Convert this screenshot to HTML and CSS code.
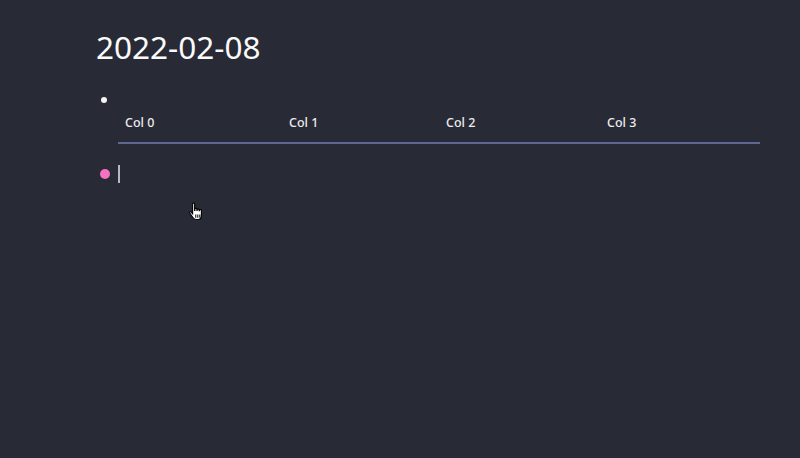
FILE: index.html
```html
<!DOCTYPE html>
<html>
<head>
<meta charset="utf-8">
<link rel="stylesheet" href="styles.css">
</head>
<body>
<div class="page">
  <h1 class="title">2022-02-08</h1>
  <div class="block">
    <span class="bullet"></span>
    <div class="content">
      <table class="tbl">
        <thead>
          <tr><th class="c0">Col 0</th><th class="c1">Col 1</th><th class="c2">Col 2</th><th class="c3">Col 3</th></tr>
        </thead>
      </table>
    </div>
  </div>
  <div class="block edit">
    <span class="bullet pink"></span>
    <div class="content"><span class="caret"></span></div>
  </div>
</div>
<svg class="pointer" width="16" height="18" viewBox="0 0 14 16">
  <path d="M4 1.5c0-.8 1.8-.8 1.8 0V7.5h.2V6.3c0-.8 1.8-.8 1.8 0V7.5h.2V6.8c0-.8 1.8-.8 1.8 0v.9h.2v-.3c0-.8 1.8-.8 1.8 0V12c0 2-1.2 3.5-3 3.5H7c-1.3 0-2.1-.7-2.8-1.7L1.3 9.6c-.5-.8.6-1.5 1.2-.8L4 10.5z" fill="#fff" stroke="#000" stroke-width="1"/>
  <path d="M6.8 11v3M8.6 11v3M10.4 11v3" stroke="#000" stroke-width=".9"/>
</svg>
</body>
</html>
```
FILE: styles.css
```css
html, body {
  margin: 0;
  padding: 0;
  background: #282a36;
  height: 100%;
  overflow: hidden;
}
body {
  font-family: "Noto Sans", "Liberation Sans", sans-serif;
  color: #f2f2f2;
  position: relative;
}
.page {
  padding: 27px 40px 0 96px;
}
.title {
  margin: 0 0 19px 0;
  font-size: 31.5px;
  font-weight: 400;
  line-height: 40px;
  color: #fafafa;
}
.block {
  display: flex;
  align-items: flex-start;
}
.bullet {
  width: 6px;
  height: 6px;
  border-radius: 50%;
  background: #f5f5f5;
  margin: 11px 0 0 5px;
  flex: none;
}
.bullet.pink {
  width: 10px;
  height: 10px;
  background: #f472c0;
  margin: 10px 0 0 4px;
}
.content {
  margin-left: 11px;
  flex: 1;
}
.tbl {
  border-collapse: collapse;
  margin-top: 28px;
  width: 642px;
}
.tbl th {
  text-align: left;
  font-size: 12.5px;
  font-weight: 500;
  color: #ededed;
  padding: 0 0 10px 7px;
  line-height: 18px;
  border-bottom: 2px solid #5d6792;
}
.c0 { width: 157px; }
.c1 { width: 150px; }
.c2 { width: 154px; }
.edit {
  margin-top: 15px;
}
.edit .content {
  margin-left: 8px;
}
.caret {
  display: block;
  width: 2px;
  height: 18px;
  background: #b8b8c0;
  margin-top: 6px;
}
.pointer {
  position: absolute;
  left: 188px;
  top: 202px;
}
```
